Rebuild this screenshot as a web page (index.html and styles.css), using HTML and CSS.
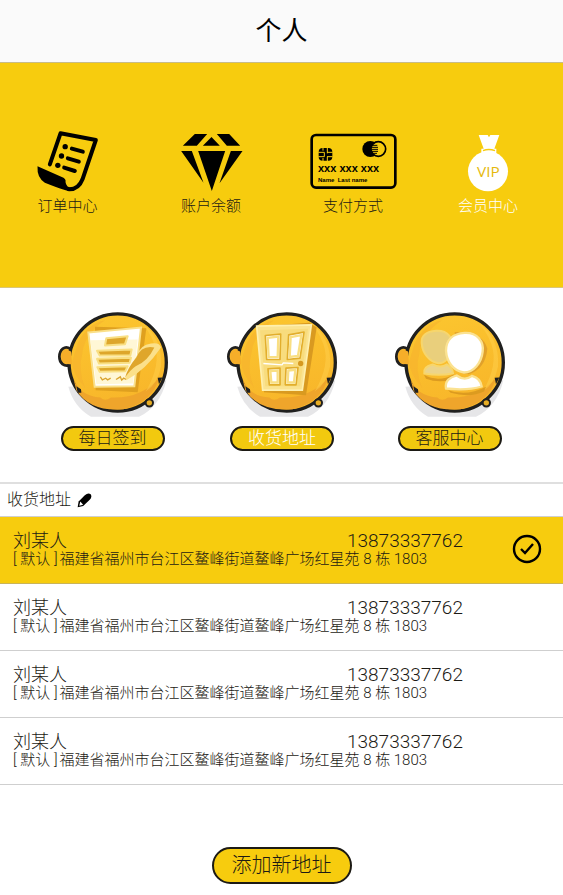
FILE: index.html
```html
<!DOCTYPE html>
<html lang="zh-CN">
<head>
<meta charset="utf-8">
<meta name="viewport" content="width=device-width, initial-scale=1">
<title>个人</title>
<link rel="stylesheet" href="styles.css">
</head>
<body>
<svg class="defs" aria-hidden="true">
  <defs>
    <linearGradient id="gold" x1="0" y1="0" x2="0.3" y2="1">
      <stop offset="0" stop-color="#fcc72f"/>
      <stop offset="1" stop-color="#f8b62a"/>
    </linearGradient>
    <symbol id="badge" viewBox="50 60 336 326">
      <path d="M84 290Q100 350 152 380H296Q360 348 378 270Z" fill="#e6e6e8"/>
      <path d="M90 176C74 164 57 178 57 200C57 220 72 230 88 225Z" fill="#f6b32a" stroke="#20201f" stroke-width="8"/>
      <circle cx="232" cy="217" r="146" fill="url(#gold)" stroke="#20201f" stroke-width="10"/>
      <path d="M64 190Q74 174 92 184L95 222Q72 224 66 212Z" fill="#f6ae29"/>
      <path d="M100 268Q120 318 180 322Q194 336 212 322Q306 326 358 260Q336 338 250 357Q150 366 108 300Z" fill="#efa52b"/>
      <path d="M112 160Q140 100 194 90Q132 130 126 190Q112 240 134 292Q96 250 96 214Z" fill="#f5b02d" opacity=".5"/>
      <path d="M300 96Q368 140 362 230Q352 282 316 304Q364 222 342 162Q326 118 300 96Z" fill="#ffd04b" opacity=".5"/>
      <path d="M108 288L122 297L123 308L112 308ZM352 263L366 262L356 282Z" fill="#20201f"/>
      <circle cx="327" cy="338" r="11" fill="#e7ad24" stroke="#20201f" stroke-width="6"/>
    </symbol>
  </defs>
</svg>

<header class="topbar"><h1>个人</h1></header>

<main>
  <nav class="shortcuts" aria-label="个人">
    <a class="shortcut" href="#orders">
      <svg class="shortcut-icon" viewBox="108 60 188 186" width="63" height="62" aria-hidden="true">
        <path d="M149 163L181 70L287 90L247 208Q235 239 206 238" fill="none" stroke="#000" stroke-width="12" stroke-linecap="round" stroke-linejoin="round"/>
        <path d="M112 169L190 203Q198 208 196 216Q198 232 214 234L226 235Q216 244 204 243Q176 235 134 218Q110 204 112 169Z"/>
        <g stroke="#000" stroke-width="12" stroke-linecap="round"><path d="M215 116L248 125M203 145L236 155M192 173L224 183"/></g>
        <circle cx="195" cy="110" r="8"/><circle cx="184" cy="138" r="8"/><circle cx="173" cy="166" r="8"/>
      </svg>
      <span>订单中心</span>
    </a>
    <a class="shortcut" href="#balance">
      <svg class="shortcut-icon" viewBox="540 60 188 186" width="63" height="62" aria-hidden="true">
        <path d="M584 72H621L590 107H548ZM650 72H687L720 107H680ZM634 81L659 107H608ZM543 123H575L610 218ZM594 123H675L635 243ZM692 123H727L658 220Z"/>
      </svg>
      <span>账户余额</span>
    </a>
    <a class="shortcut" href="#payment">
      <svg class="shortcut-icon" viewBox="86 60 264 186" width="88" height="62" aria-hidden="true">
        <rect x="94" y="75" width="251" height="158" rx="13" fill="none" stroke="#000" stroke-width="8"/>
        <rect x="115" y="114" width="41" height="38" rx="12"/>
        <path d="M114 127H132M114 140H132M140 127H157M140 140H157M128 113V122M141 113V130M128 144V153M141 140V153M132 127V140" stroke="#f7cc0e" stroke-width="3"/>
        <circle cx="270" cy="117" r="24"/>
        <circle cx="294" cy="117" r="22" fill="#f7cc0e" stroke="#000" stroke-width="5"/>
        <path d="M276 106H291M274 112H293M274 118H293M274 124H293M278 130H290" stroke="#000" stroke-width="3"/>
        <text x="113" y="187" class="card-number">xxx xxx xxx</text>
        <text x="113" y="216" class="card-name">Name&#160; Last name</text>
      </svg>
      <span>支付方式</span>
    </a>
    <a class="shortcut is-current" href="#vip" aria-current="page">
      <svg class="shortcut-icon" viewBox="560 60 132 186" width="44" height="62" aria-hidden="true">
        <path d="M598 75H625L629 82L633 75H660L645 116H651V132H606V116H613Z" fill="#fff"/>
        <path d="M611 122Q628 115 647 122" fill="none" stroke="#f7cc0e" stroke-width="4"/>
        <circle cx="626" cy="184" r="60" fill="#fff"/>
        <text x="627" y="201" class="vip-text">VIP</text>
      </svg>
      <span>会员中心</span>
    </a>
  </nav>

  <nav class="services" aria-label="服务">
    <a class="service" href="#checkin">
      <svg viewBox="50 60 336 326" width="112" height="109" aria-hidden="true">
        <use href="#badge" x="50" y="60" width="336" height="326"/>
        <path d="M164 110L318 114L292 306L166 300Z" fill="#dfa01f"/>
        <path d="M144 127L302 112L282 288L163 290Z" fill="#fff" stroke="#fae08a" stroke-width="6"/>
        <path d="M150 150L292 148L278 280L168 282Z" fill="#fff3c4" opacity=".7"/>
        <g fill="#dda62b" stroke="#f9df83" stroke-width="6" stroke-linejoin="round">
          <path d="M198 144L262 138L254 162L194 166Z"/>
          <path d="M170 182L274 178L270 196L178 196ZM170 206L272 203L268 218L176 220ZM171 231L262 228L255 243L178 245Z"/>
        </g>
        <path d="M180 260L186 269L196 264L202 269L211 264M227 268L240 260L244 270L250 264L258 268" fill="none" stroke="#d9a42f" stroke-width="4"/>
        <path d="M258 270Q316 240 362 172Q358 156 332 160Q300 164 290 196Q268 228 256 262Z" fill="#fbe08a"/>
        <path d="M254 263Q262 233 288 202Q304 164 342 172Q322 214 286 228Q268 240 254 263Z" fill="#dfa62b"/>
      </svg>
      <span class="pill">每日签到</span>
    </a>
    <a class="service is-current" href="#address" aria-current="page">
      <svg viewBox="50 60 336 326" width="112" height="109" aria-hidden="true">
        <use href="#badge" x="50" y="60" width="336" height="326"/>
        <path d="M152 108L300 98L322 112L290 315L164 306Z" fill="#d99a20"/>
        <path d="M142 108L306 104L279 300L160 300Z" fill="#fae391" stroke="#fff0ae" stroke-width="5"/>
        <path d="M152 120L296 116L272 288L168 288Z" fill="#f8dc7d"/>
        <g fill="#fff" stroke="#e2ae2c" stroke-width="5" stroke-linejoin="round">
          <path d="M168 136L214 132L212 208L172 208Z"/>
          <path d="M238 134L284 126L272 204L234 208Z"/>
          <path d="M176 236L212 234V284H180Z"/>
          <path d="M230 234L266 232L260 284H228Z"/>
        </g>
        <g fill="none" stroke="#f9df83" stroke-width="7"><path d="M175 143L207 139L205 201H178ZM244 141L276 135L266 197L241 200ZM183 243L205 241V277H186ZM237 241L258 239L254 277H235Z"/></g>
        <path d="M162 220L218 224L222 218L252 220" fill="none" stroke="#fff" stroke-width="4"/>
        <circle cx="274" cy="220" r="8" fill="#d6981f"/>
      </svg>
      <span class="pill">收货地址</span>
    </a>
    <a class="service" href="#support">
      <svg viewBox="50 60 336 326" width="112" height="109" aria-hidden="true">
        <use href="#badge" x="50" y="60" width="336" height="326"/>
        <g transform="translate(8 0)">
          <path d="M132 254Q176 278 222 252L218 268Q176 280 138 266ZM204 300Q260 320 318 290L312 304Q270 324 212 308Z" fill="#dc9b20"/>
          <path d="M224 126Q310 124 322 176Q316 238 266 252L240 248Z" fill="#e1a12a"/>
          <path d="M168 122C204 120 222 144 214 176C209 204 194 219 176 219C148 216 127 188 125 158C124 134 144 124 168 122Z" fill="#e9cf7c" stroke="#f7d66c" stroke-width="6"/>
          <path d="M133 250C130 233 144 226 158 223Q182 235 200 223Q216 230 219 249Q182 258 133 250Z" fill="#ecd48a" stroke="#f7d66c" stroke-width="6"/>
          <path d="M254 128C292 126 312 154 308 184C304 220 280 247 252 247C222 244 200 216 198 182C198 150 218 130 254 128Z" fill="#fff" stroke="#fbe291" stroke-width="7"/>
          <path d="M198 295C194 270 210 262 230 256Q254 274 276 257Q302 264 305 289Q262 302 198 295Z" fill="#fff" stroke="#fbe291" stroke-width="7"/>
        </g>
      </svg>
      <span class="pill">客服中心</span>
    </a>
  </nav>

  <section class="addresses">
    <div class="section-head">
      <h2>收货地址</h2>
      <button class="edit" type="button" aria-label="编辑收货地址">
        <svg viewBox="232 65 46 46" width="15" height="15" aria-hidden="true">
          <path d="M256 72Q266 63 274 69Q279 78 271 86L251 105L234 109L237 91Z"/>
          <path d="M242 91L251 101L239 104Z" fill="#fff"/>
        </svg>
      </button>
    </div>
    <ul class="address-list">
      <li class="address is-selected">
        <div class="address-body">
          <span class="name">刘某人</span><span class="phone">13873337762</span>
          <p class="detail"><span class="tag">[ 默认 ]</span>福建省福州市台江区鳌峰街道鳌峰广场红星苑 8 栋 1803</p>
        </div>
        <svg class="check" viewBox="0 0 30 30" width="30" height="30" role="img" aria-label="已选择">
          <circle cx="15" cy="15" r="13" fill="none" stroke="#000" stroke-width="2.4"/>
          <path d="M9 15L13 19L21 10" fill="none" stroke="#000" stroke-width="2.4"/>
        </svg>
      </li>
      <li class="address">
        <div class="address-body">
          <span class="name">刘某人</span><span class="phone">13873337762</span>
          <p class="detail"><span class="tag">[ 默认 ]</span>福建省福州市台江区鳌峰街道鳌峰广场红星苑 8 栋 1803</p>
        </div>
      </li>
      <li class="address">
        <div class="address-body">
          <span class="name">刘某人</span><span class="phone">13873337762</span>
          <p class="detail"><span class="tag">[ 默认 ]</span>福建省福州市台江区鳌峰街道鳌峰广场红星苑 8 栋 1803</p>
        </div>
      </li>
      <li class="address">
        <div class="address-body">
          <span class="name">刘某人</span><span class="phone">13873337762</span>
          <p class="detail"><span class="tag">[ 默认 ]</span>福建省福州市台江区鳌峰街道鳌峰广场红星苑 8 栋 1803</p>
        </div>
      </li>
    </ul>
    <button class="add" type="button">添加新地址</button>
  </section>
</main>
</body>
</html>
```

FILE: styles.css
```css
:root {
  --yellow: #f7cc0e;
  --ink: #1c1a14;
  --line: #cfcfcf;
}

* {
  box-sizing: border-box;
}

body {
  margin: 0;
  background: #fff;
  color: var(--ink);
  font-family: Roboto, "Noto Sans CJK SC", sans-serif;
  font-weight: 300;
}

h1,
h2,
p,
ul {
  margin: 0;
  padding: 0;
  font-weight: 300;
}

ul {
  list-style: none;
}

a {
  color: inherit;
  text-decoration: none;
}

button {
  font: inherit;
  color: inherit;
  cursor: pointer;
}

svg {
  display: block;
}

.defs {
  position: absolute;
  width: 0;
  height: 0;
}

.topbar {
  display: flex;
  align-items: center;
  justify-content: center;
  height: 63px;
  background: #fafafa;
  border-bottom: 1px solid #c9bc86;
}

.topbar h1 {
  font-size: 26px;
  font-weight: 400;
  line-height: 32px;
  color: #000;
}

.shortcuts {
  display: grid;
  grid-template-columns: 135fr 152fr 132fr 138fr;
  padding: 67px 6px 71px 0;
  background: var(--yellow);
  border-bottom: 1px solid #d9c67a;
}

.shortcut {
  display: flex;
  flex-direction: column;
  align-items: center;
  gap: 4px;
  font-size: 15px;
  line-height: 20px;
}

.shortcut.is-current {
  color: #fff;
}

.card-number {
  font: bold 33px "Liberation Sans", sans-serif;
}

.card-name {
  font: bold 18px "Liberation Sans", sans-serif;
}

.vip-text {
  font: 46px "Open Sans", sans-serif;
  fill: #e5b90c;
  text-anchor: middle;
}

.services {
  display: grid;
  grid-template-columns: 169fr 170fr 165fr;
  padding: 22px 31px 31px 28px;
  border-bottom: 2px solid #dfdfdf;
}

.service {
  display: flex;
  flex-direction: column;
  align-items: center;
  gap: 7px;
}

.pill {
  padding: 0 16px;
  border: 2px solid var(--ink);
  border-radius: 13px;
  background: #f2c90f;
  font-size: 17px;
  line-height: 21px;
}

.service.is-current .pill {
  border-color: var(--ink);
  color: #fff;
}

.section-head {
  display: flex;
  align-items: center;
  gap: 6px;
  height: 33px;
  padding: 0 7px;
  border-bottom: 1px solid var(--line);
}

.section-head h2 {
  font-size: 16px;
  line-height: 24px;
}

.edit {
  padding: 0;
  border: 0;
  background: none;
}

.address {
  display: flex;
  align-items: center;
  justify-content: space-between;
  padding: 14px 21px 16px 13px;
  border-bottom: 1px solid var(--line);
}

.address.is-selected {
  background: var(--yellow);
  border-bottom-color: #c9b458;
}

.address-body {
  display: grid;
  grid-template-columns: 334px auto;
  line-height: 20px;
}

.name {
  font-size: 18px;
}

.phone {
  font-size: 19px;
}

.detail {
  grid-column: 1 / -1;
  font-size: 15px;
  line-height: 16px;
}

.tag {
  margin-right: 2px;
}

.add {
  display: block;
  margin: 62px auto 12px;
  padding: 0 18px;
  border: 2px solid var(--ink);
  border-radius: 19px;
  background: var(--yellow);
  font-size: 20px;
  line-height: 33px;
}
```
